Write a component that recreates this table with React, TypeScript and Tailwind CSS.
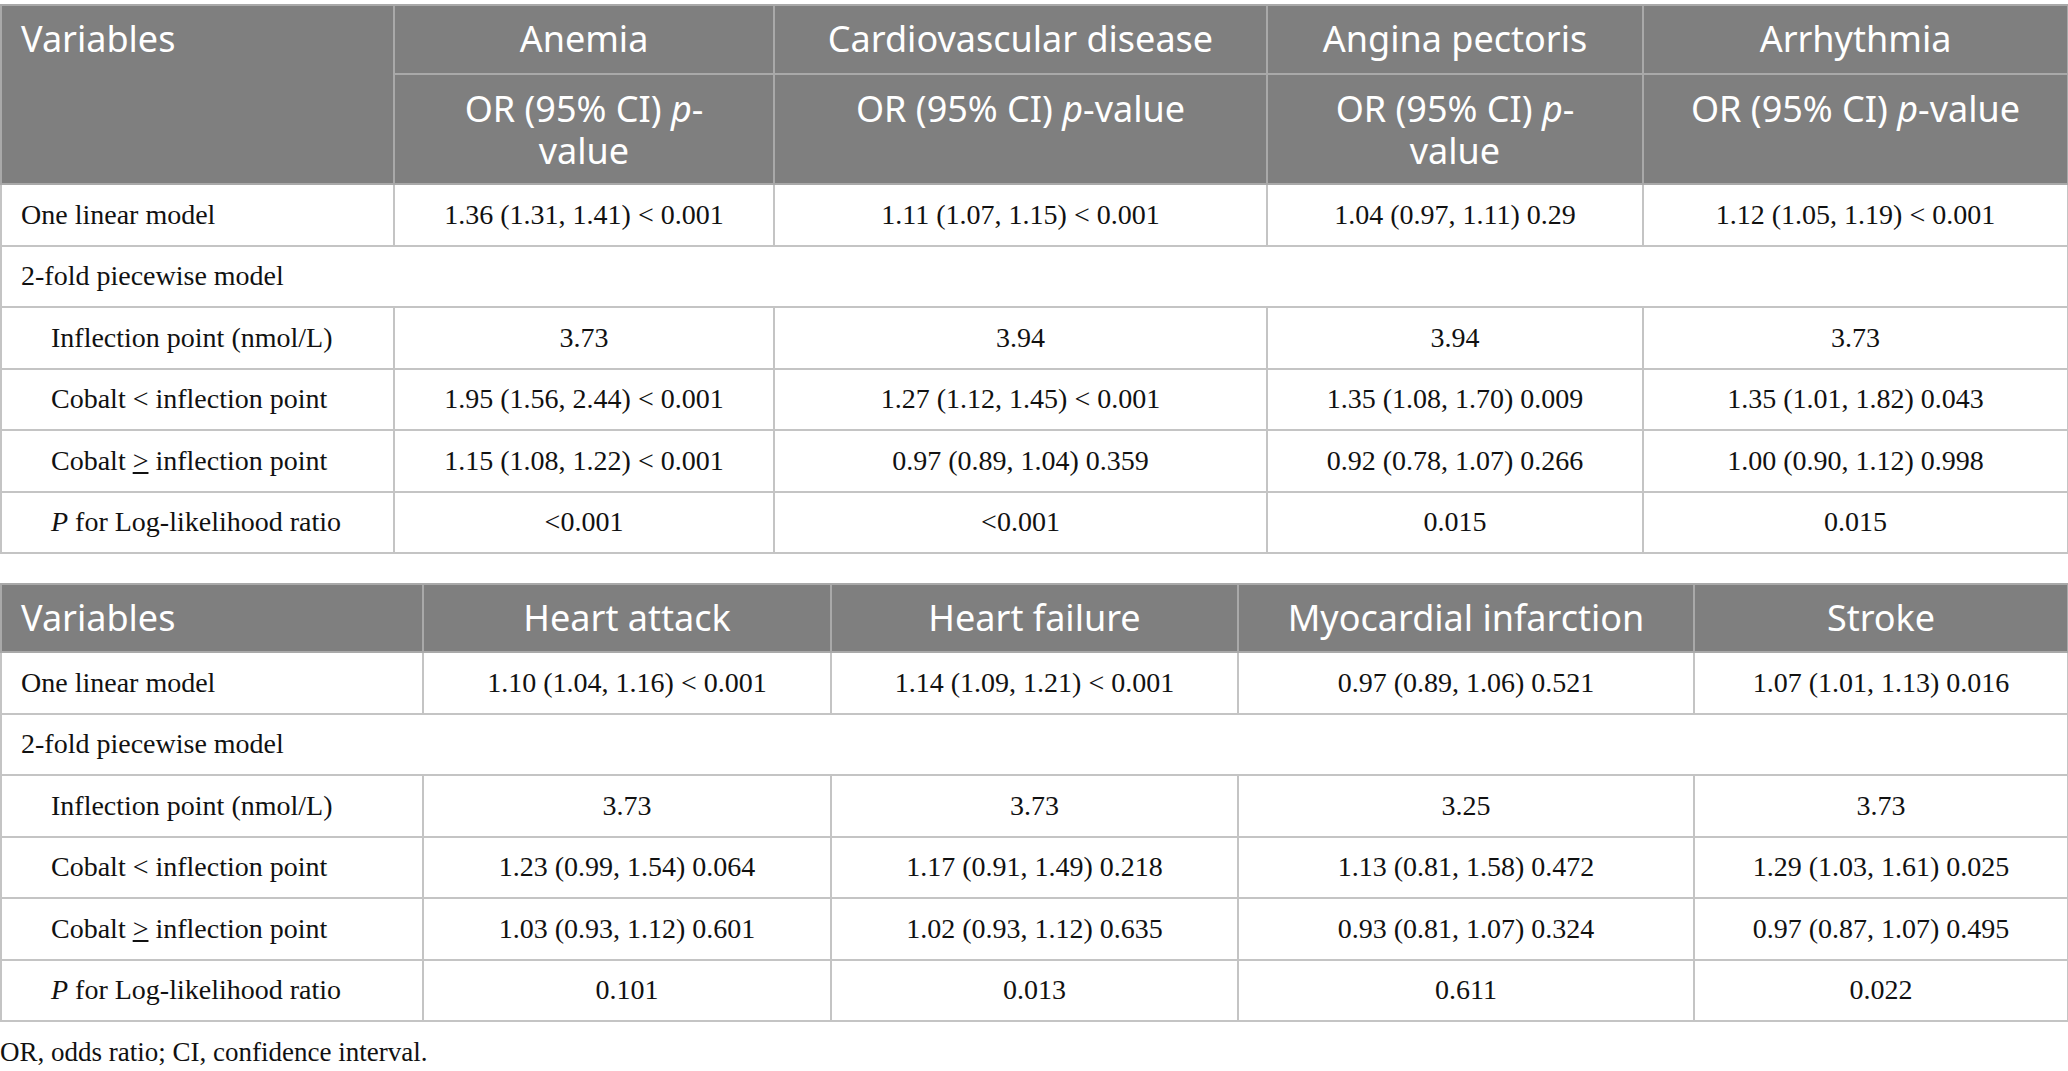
import React from "react";

type Row = { label: React.ReactNode; indent?: boolean; cells?: string[]; span?: boolean };

const sans = { fontFamily: '"Noto Sans", sans-serif' };

const PLabel = () => (
  <>
    <i>P</i> for Log-likelihood ratio
  </>
);

const t1Rows: Row[] = [
  { label: "One linear model", cells: ["1.36 (1.31, 1.41) < 0.001", "1.11 (1.07, 1.15) < 0.001", "1.04 (0.97, 1.11) 0.29", "1.12 (1.05, 1.19) < 0.001"] },
  { label: "2-fold piecewise model", span: true },
  { label: "Inflection point (nmol/L)", indent: true, cells: ["3.73", "3.94", "3.94", "3.73"] },
  { label: "Cobalt < inflection point", indent: true, cells: ["1.95 (1.56, 2.44) < 0.001", "1.27 (1.12, 1.45) < 0.001", "1.35 (1.08, 1.70) 0.009", "1.35 (1.01, 1.82) 0.043"] },
  { label: <>Cobalt <span className="underline">&gt;</span> inflection point</>, indent: true, cells: ["1.15 (1.08, 1.22) < 0.001", "0.97 (0.89, 1.04) 0.359", "0.92 (0.78, 1.07) 0.266", "1.00 (0.90, 1.12) 0.998"] },
  { label: <PLabel />, indent: true, cells: ["<0.001", "<0.001", "0.015", "0.015"] },
];

const t2Rows: Row[] = [
  { label: "One linear model", cells: ["1.10 (1.04, 1.16) < 0.001", "1.14 (1.09, 1.21) < 0.001", "0.97 (0.89, 1.06) 0.521", "1.07 (1.01, 1.13) 0.016"] },
  { label: "2-fold piecewise model", span: true },
  { label: "Inflection point (nmol/L)", indent: true, cells: ["3.73", "3.73", "3.25", "3.73"] },
  { label: "Cobalt < inflection point", indent: true, cells: ["1.23 (0.99, 1.54) 0.064", "1.17 (0.91, 1.49) 0.218", "1.13 (0.81, 1.58) 0.472", "1.29 (1.03, 1.61) 0.025"] },
  { label: <>Cobalt <span className="underline">&gt;</span> inflection point</>, indent: true, cells: ["1.03 (0.93, 1.12) 0.601", "1.02 (0.93, 1.12) 0.635", "0.93 (0.81, 1.07) 0.324", "0.97 (0.87, 1.07) 0.495"] },
  { label: <PLabel />, indent: true, cells: ["0.101", "0.013", "0.611", "0.022"] },
];

function Body({ rows }: { rows: Row[] }) {
  return (
    <tbody>
      {rows.map((r, i) => (
        <tr key={i} className="h-[61.5px]">
          {r.span ? (
            <td colSpan={5} className="border-2 border-[#c4c4c4] pl-[19px] align-middle">
              {r.label}
            </td>
          ) : (
            <>
              <td className={`border-2 border-[#c4c4c4] align-middle ${r.indent ? "pl-[49px]" : "pl-[19px]"}`}>{r.label}</td>
              {r.cells!.map((c, j) => (
                <td key={j} className="border-2 border-[#c4c4c4] text-center align-middle">
                  {c}
                </td>
              ))}
            </>
          )}
        </tr>
      ))}
    </tbody>
  );
}

const OrHead = ({ wrap }: { wrap?: boolean }) => (
  <>
    OR (95% CI) <i>p</i>-{wrap ? <br /> : null}value
  </>
);

export default function App() {
  return (
    <div
      className="w-[2068px] bg-white pt-[4px] text-[28px] leading-[34px] text-[#111]"
      style={{ fontFamily: '"Liberation Serif", serif' }}
    >
      <table className="w-[2067px] table-fixed border-collapse">
        <colgroup>
          <col className="w-[393px]" />
          <col className="w-[380px]" />
          <col className="w-[493px]" />
          <col className="w-[376px]" />
          <col className="w-[425px]" />
        </colgroup>
        <thead className="bg-[#7f7f7f] text-white text-[36px] leading-[42px] font-normal" style={sans}>
          <tr className="h-[69px]">
            <th rowSpan={2} className="border-2 border-[#a9a9a9] pl-[19px] pt-[12px] text-left align-top font-normal">
              Variables
            </th>
            <th className="border-2 border-[#a9a9a9] text-center align-top pt-[12px] font-normal">Anemia</th>
            <th className="border-2 border-[#a9a9a9] text-center align-top pt-[12px] font-normal">Cardiovascular disease</th>
            <th className="border-2 border-[#a9a9a9] text-center align-top pt-[12px] font-normal">Angina pectoris</th>
            <th className="border-2 border-[#a9a9a9] text-center align-top pt-[12px] font-normal">Arrhythmia</th>
          </tr>
          <tr className="h-[110px]">
            <th className="border-2 border-[#a9a9a9] text-center align-top pt-[13px] font-normal"><OrHead wrap /></th>
            <th className="border-2 border-[#a9a9a9] text-center align-top pt-[13px] font-normal"><OrHead /></th>
            <th className="border-2 border-[#a9a9a9] text-center align-top pt-[13px] font-normal"><OrHead wrap /></th>
            <th className="border-2 border-[#a9a9a9] text-center align-top pt-[13px] font-normal"><OrHead /></th>
          </tr>
        </thead>
        <Body rows={t1Rows} />
      </table>

      <table className="mt-[29px] w-[2067px] table-fixed border-collapse">
        <colgroup>
          <col className="w-[422px]" />
          <col className="w-[408px]" />
          <col className="w-[407px]" />
          <col className="w-[456px]" />
          <col className="w-[374px]" />
        </colgroup>
        <thead className="bg-[#7f7f7f] text-white text-[36px] leading-[42px]" style={sans}>
          <tr className="h-[68px]">
            <th className="border-2 border-[#a9a9a9] pl-[19px] text-left align-middle font-normal">Variables</th>
            <th className="border-2 border-[#a9a9a9] text-center align-middle font-normal">Heart attack</th>
            <th className="border-2 border-[#a9a9a9] text-center align-middle font-normal">Heart failure</th>
            <th className="border-2 border-[#a9a9a9] text-center align-middle font-normal">Myocardial infarction</th>
            <th className="border-2 border-[#a9a9a9] text-center align-middle font-normal">Stroke</th>
          </tr>
        </thead>
        <Body rows={t2Rows} />
      </table>

      <p className="mt-[14px] text-[27px] leading-[32px]">OR, odds ratio; CI, confidence interval.</p>
    </div>
  );
}
